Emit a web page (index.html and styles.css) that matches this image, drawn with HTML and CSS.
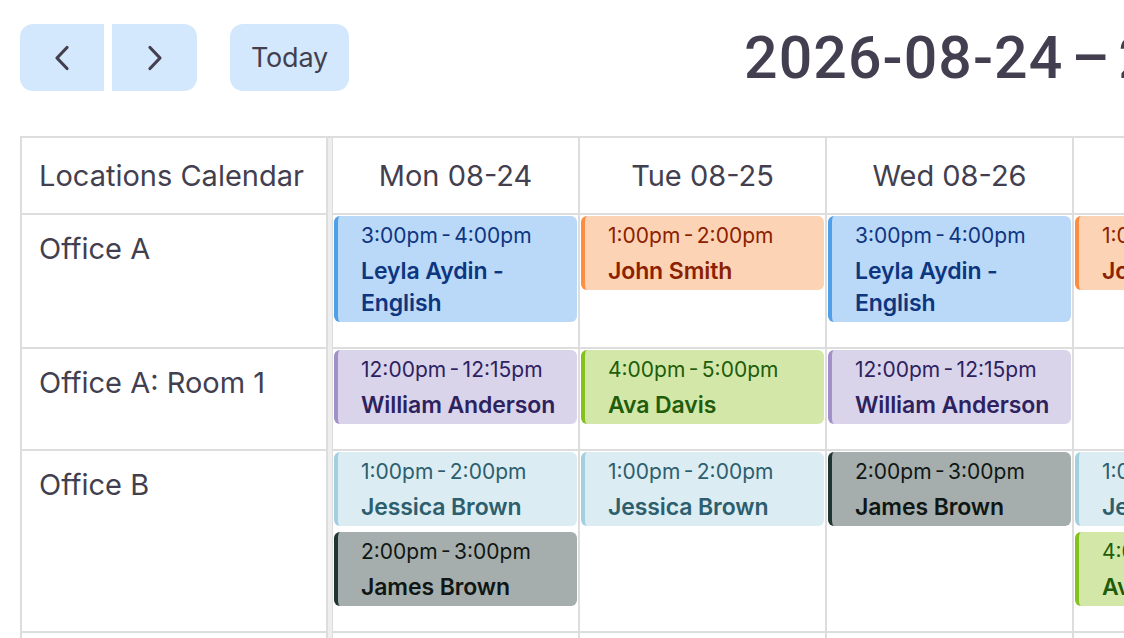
FILE: index.html
```html
<!DOCTYPE html>
<html lang="en">
<head>
<meta charset="utf-8">
<title>Locations Calendar</title>
<link rel="stylesheet" href="styles.css">
</head>
<body>
<div class="page">
  <div class="toolbar">
    <div class="btn-group">
      <button class="btn btn-prev" aria-label="prev">
        <svg width="16" height="26" viewBox="0 0 16 26"><path d="M13 2.5 L3 13 L13 23.5" fill="none" stroke="#433f4f" stroke-width="3.2" stroke-linecap="round" stroke-linejoin="round"/></svg>
      </button>
      <button class="btn btn-next" aria-label="next">
        <svg width="16" height="26" viewBox="0 0 16 26"><path d="M3 2.5 L13 13 L3 23.5" fill="none" stroke="#433f4f" stroke-width="3.2" stroke-linecap="round" stroke-linejoin="round"/></svg>
      </button>
    </div>
    <button class="btn btn-today">Today</button>
    <h2 class="title">2026-08-24<span class="sep">–</span>2026-08-30</h2>
  </div>

  <div class="grid">
    <div class="divider"></div>

    <div class="res head">Locations Calendar</div>
    <div class="day head">Mon 08-24</div>
    <div class="day head">Tue 08-25</div>
    <div class="day head">Wed 08-26</div>
    <div class="day head">Thu 08-27</div>
    <div class="day head">Fri 08-28</div>
    <div class="day head">Sat 08-29</div>
    <div class="day head">Sun 08-30</div>

    <div class="res">Office A</div>
    <div class="day"><div class="ev blue"><div class="t">3:00pm - 4:00pm</div><div class="n">Leyla Aydin - English</div></div></div>
    <div class="day"><div class="ev orange"><div class="t">1:00pm - 2:00pm</div><div class="n">John Smith</div></div></div>
    <div class="day"><div class="ev blue"><div class="t">3:00pm - 4:00pm</div><div class="n">Leyla Aydin - English</div></div></div>
    <div class="day"><div class="ev orange"><div class="t">1:00pm - 2:00pm</div><div class="n">John Smith</div></div></div>
    <div class="day"></div>
    <div class="day"></div>
    <div class="day"></div>

    <div class="res">Office A: Room 1</div>
    <div class="day"><div class="ev purple"><div class="t">12:00pm - 12:15pm</div><div class="n">William Anderson</div></div></div>
    <div class="day"><div class="ev green"><div class="t">4:00pm - 5:00pm</div><div class="n">Ava Davis</div></div></div>
    <div class="day"><div class="ev purple"><div class="t">12:00pm - 12:15pm</div><div class="n">William Anderson</div></div></div>
    <div class="day"></div>
    <div class="day"></div>
    <div class="day"></div>
    <div class="day"></div>

    <div class="res">Office B</div>
    <div class="day">
      <div class="ev light"><div class="t">1:00pm - 2:00pm</div><div class="n">Jessica Brown</div></div>
      <div class="ev gray"><div class="t">2:00pm - 3:00pm</div><div class="n">James Brown</div></div>
    </div>
    <div class="day"><div class="ev light"><div class="t">1:00pm - 2:00pm</div><div class="n">Jessica Brown</div></div></div>
    <div class="day"><div class="ev gray"><div class="t">2:00pm - 3:00pm</div><div class="n">James Brown</div></div></div>
    <div class="day">
      <div class="ev light"><div class="t">1:00pm - 2:00pm</div><div class="n">Jessica Brown</div></div>
      <div class="ev green"><div class="t">4:00pm - 5:00pm</div><div class="n">Ava Davis</div></div>
    </div>
    <div class="day"></div>
    <div class="day"></div>
    <div class="day"></div>

    <div class="res empty"></div>
    <div class="day empty"></div>
    <div class="day empty"></div>
    <div class="day empty"></div>
    <div class="day empty"></div>
    <div class="day empty"></div>
    <div class="day empty"></div>
    <div class="day empty"></div>
  </div>
</div>
</body>
</html>
```

FILE: styles.css
```css
html, body {
  margin: 0;
  padding: 0;
  overflow: hidden;
  background: #ffffff;
}

.page {
  font-family: "Inter", "Noto Sans", sans-serif;
  color: #433f4f;
  padding: 24px 0 0 20px;
  width: max-content;
}

.toolbar {
  display: flex;
  align-items: center;
  height: 67px;
}

.btn-group {
  display: flex;
  gap: 8px;
}

.btn {
  border: none;
  background: #d3e8fc;
  height: 67px;
  margin: 0;
  padding: 0;
  display: flex;
  align-items: center;
  justify-content: center;
  font-family: inherit;
  color: #433f4f;
}

.btn-prev {
  width: 84px;
  border-radius: 13px 0 0 13px;
}

.btn-next {
  width: 85px;
  border-radius: 0 13px 13px 0;
}

.btn-today {
  margin-left: 33px;
  width: 119px;
  border-radius: 13px;
  font-size: 27px;
  letter-spacing: -0.2px;
}

.title {
  margin: 0 0 0 395px;
  font-family: "Roboto", "Liberation Sans", Arial, sans-serif;
  font-weight: 500;
  font-size: 59px;
  line-height: 1;
  letter-spacing: 1.1px;
  color: #433f50;
  white-space: nowrap;
}

.sep {
  margin: 0 8px 0 8px;
}

.grid {
  margin-top: 45px;
  display: grid;
  grid-template-columns: 306px 7px repeat(7, 247px);
  border-top: 2px solid #dddddd;
}

.divider {
  grid-column: 2;
  grid-row: 1 / span 5;
  background: #eeeeee;
  border-left: 2px solid #dddddd;
  border-right: 1px solid #dddddd;
}

.res {
  grid-column: 1;
  border-left: 2px solid #dddddd;
  border-bottom: 2px solid #dddddd;
  padding: 16px 10px 0 17px;
  font-size: 29px;
  line-height: 36px;
  color: #433f4f;
}

.res.head {
  height: 75px;
  padding: 0 0 0 17px;
  display: flex;
  align-items: center;
}

.day {
  border-right: 2px solid #dddddd;
  border-bottom: 2px solid #dddddd;
  padding: 1px 1px 25px 1px;
  display: flex;
  flex-direction: column;
  gap: 6px;
}

.day.head {
  height: 75px;
  padding: 0;
  align-items: center;
  justify-content: center;
  font-size: 29px;
  color: #433f4f;
}

.res.empty, .day.empty {
  height: 40px;
  padding: 0;
}

.ev {
  border-left: 4px solid;
  border-radius: 6px;
  padding: 4px 6px 3px 23px;
}

.ev .t {
  font-size: 21px;
  word-spacing: -2.5px;
  line-height: 32px;
  margin-bottom: 3px;
  white-space: nowrap;
  overflow: hidden;
}

.ev .n {
  font-size: 23px;
  font-weight: 600;
  line-height: 32px;
  letter-spacing: -0.1px;
}

.blue   { background: #bad8f7; border-color: #4f9fe9; color: #0d3580; }
.orange { background: #fdd3b5; border-color: #fb8e43; color: #8b2100; }
.purple { background: #dad4ea; border-color: #a091c9; color: #2d2260; }
.green  { background: #d3e8a8; border-color: #84c11d; color: #215c0b; }
.light  { background: #dbecf3; border-color: #a3d0e1; color: #2d5e6d; }
.gray   { background: #a5aeac; border-color: #1f3531; color: #0f1614; }
```
